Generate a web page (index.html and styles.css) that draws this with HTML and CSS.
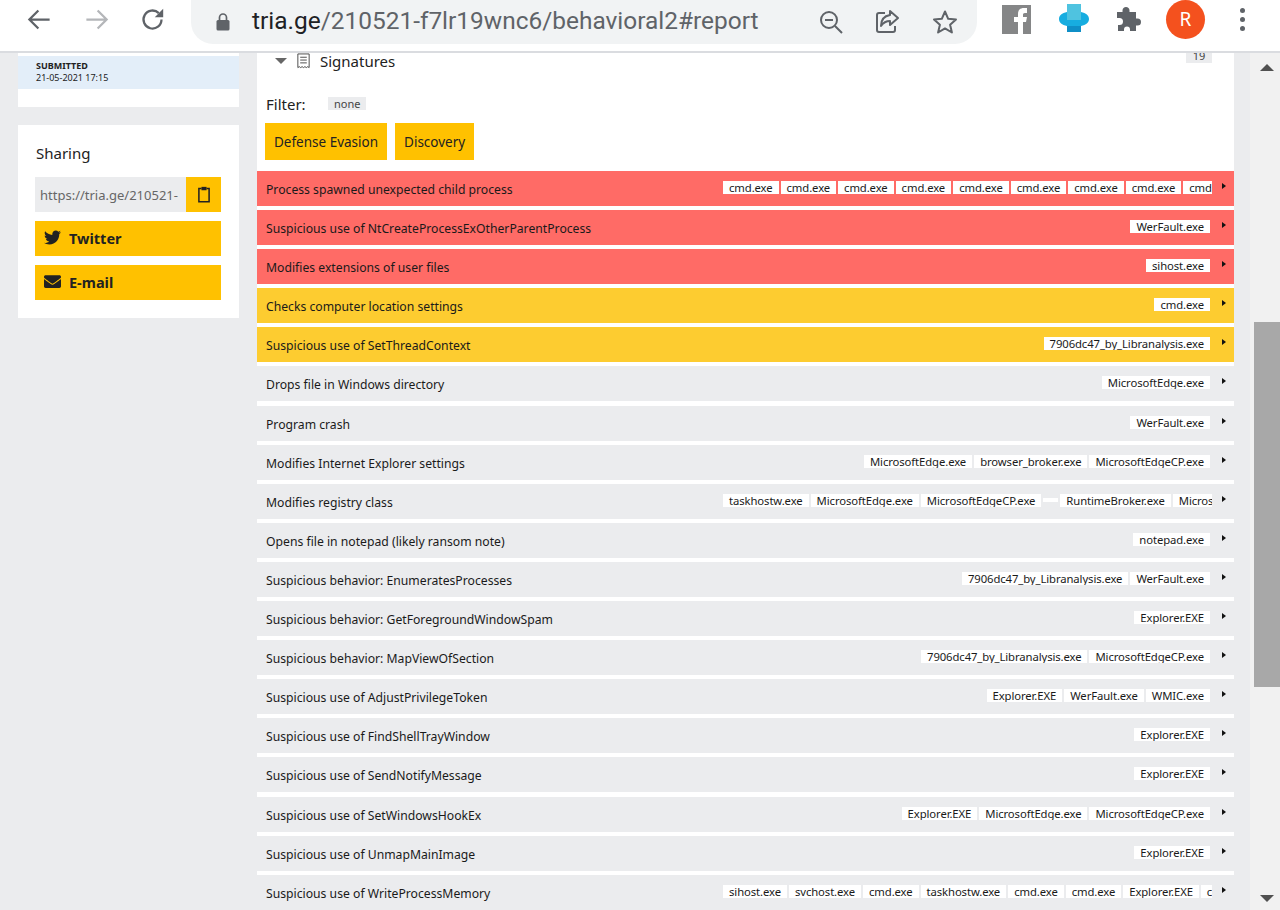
FILE: index.html
```html
<!DOCTYPE html>
<html lang="en">

<head>
    <meta charset="UTF-8">
    <title>tria.ge - behavioral2 report</title>
    <link rel="stylesheet" href="styles.css">
</head>

<body>
    <header class="toolbar">
        <div class="nav-icons">
            <svg class="nav-icon" viewBox="0 0 24 24"><path d="M21 12H4M11 4l-8 8 8 8" fill="none" stroke="#5f6368" stroke-width="2"/></svg>
            <svg class="nav-icon" viewBox="0 0 24 24"><path d="M3 12h17M13 4l8 8-8 8" fill="none" stroke="#b4b6b9" stroke-width="2"/></svg>
            <svg class="nav-icon nav-reload" viewBox="0 0 24 24"><path d="M20 12a8 8 0 1 1-2.4-5.7" fill="none" stroke="#5f6368" stroke-width="2"/><path d="M21.5 2.5v7.5H14z" fill="#5f6368"/></svg>
        </div>
        <div class="omnibox">
            <svg class="lock" viewBox="0 0 16 20"><path d="M4.500 8V5.500a3.500 3.500 0 0 1 7 0V8" fill="none" stroke="#5f6368" stroke-width="1.700"/><rect x="1.500" y="8" width="13" height="10.500" rx="1.500" fill="#5f6368"/></svg>
            <div class="url"><span class="url-host">tria.ge</span>/210521-f7lr19wnc6/behavioral2#report</div>
            <svg class="omni-icon" viewBox="0 0 26 26"><circle cx="11" cy="11" r="8" fill="none" stroke="#5f6368" stroke-width="2"/><path d="M7 11h8M17 17l7 7" fill="none" stroke="#5f6368" stroke-width="2"/></svg>
            <svg class="omni-icon" viewBox="0 0 26 26"><path d="M11 4H5a2 2 0 0 0-2 2v15a2 2 0 0 0 2 2h14a2 2 0 0 0 2-2v-4" fill="none" stroke="#5f6368" stroke-width="2"/><path d="M16 2l8 7-8 7v-4c-5 0-7 2-9 5 0-6 3-10 9-11z" fill="none" stroke="#5f6368" stroke-width="2" stroke-linejoin="round"/></svg>
            <svg class="omni-icon omni-star" viewBox="0 0 26 26"><path d="M13 2.500l3.200 7.300 7.800.7-5.900 5.200 1.800 7.800-6.900-4.100-6.900 4.100 1.800-7.800-5.900-5.200 7.800-.7z" fill="none" stroke="#5f6368" stroke-width="2" stroke-linejoin="round"/></svg>
        </div>
        <div class="extensions">
            <svg class="ext-fb" viewBox="0 0 29 29"><rect width="29" height="29" fill="#858687"/><path d="M16 29V17h-4v-5h4V9c0-4 2-6 6-6h3v5h-2c-2 0-2 1-2 2v2h4l-1 5h-3v12z" fill="#fff"/></svg>
            <svg class="ext-print" viewBox="0 0 30 30"><path d="M8 8C3 9 0 11.500 0 15s3 6 8 7h14c5-1 8-3.500 8-7s-3-6-8-7v5c0 2-1.500 3-3.500 3h-7C9.500 16 8 15 8 13z" fill="#17ade0"/><rect x="8" y="0" width="14" height="16" fill="#4fc3e0"/><rect x="8" y="22" width="14" height="6" fill="#0f8fc7"/></svg>
            <svg class="ext-puzzle" viewBox="0 0 26 26"><path d="M10 1c2 0 3.500 1.500 3.500 3.500V6H20v6.500h1.500a3.500 3.500 0 0 1 0 7H20V25h-6v-1.500a3 3 0 0 0-6 0V25H2v-6h1.500a3.500 3.500 0 0 0 0-7H1V6h5.500V4.500C6.500 2.500 8 1 10 1z" fill="#5f6368"/></svg>
            <div class="avatar">R</div>
            <div class="kebab"><i></i><i></i><i></i></div>
        </div>
    </header>

    <div class="viewport">
        <aside class="sidebar">
            <div class="card card-meta">
                <div class="submitted">
                    <strong>SUBMITTED</strong>
                    <span>21-05-2021 17:15</span>
                </div>
            </div>
            <div class="card card-share">
                <h3>Sharing</h3>
                <div class="share-link">
                    <div class="share-url">https://tria.ge/210521-</div>
                    <div class="copy-btn">
                        <svg viewBox="0 0 16 20"><path d="M5 3H2v15.500h12V3h-3" fill="none" stroke="#222" stroke-width="1.800"/><rect x="5" y="1" width="6" height="4" fill="#222"/></svg>
                    </div>
                </div>
                <div class="share-btn">
                    <svg viewBox="0 0 512 512"><path d="M459 152c.3 4.500.3 9.100.3 13.600 0 138.700-105.600 298.600-298.600 298.600-59.500 0-114.700-17.200-161.100-47.100 8.400 1 16.600 1.300 25.300 1.300 49.100 0 94.200-16.600 130.300-44.800-46.100-1-84.800-31.200-98.100-72.800 6.500 1 13 1.600 19.800 1.600 9.400 0 18.800-1.300 27.600-3.600-48.100-9.700-84.100-52-84.100-103v-1.300c14 7.800 30.200 12.700 47.400 13.300-28.300-18.800-46.800-51-46.800-87.400 0-19.500 5.200-37.400 14.300-53 51.700 63.700 129.300 105.300 216.400 109.800-1.600-7.800-2.600-15.900-2.600-24 0-57.800 46.800-104.900 104.900-104.900 30.200 0 57.500 12.700 76.700 33.100 23.700-4.500 46.500-13.300 66.600-25.300-7.800 24-24.400 44.200-46.100 57.200 21.100-2.300 41.600-8.100 60.400-16.200-14.300 20.800-32.200 39.300-52.600 54.300z" fill="#222"/></svg>
                    <span>Twitter</span>
                </div>
                <div class="share-btn">
                    <svg viewBox="0 0 512 512"><path d="M502 190c4-3 10 0 10 5v205c0 27-22 48-48 48H48c-27 0-48-21-48-48V195c0-5 6-8 10-5 22 17 52 39 154 114 21 15 57 48 92 48 36 0 72-33 92-48 102-75 132-97 154-114zM256 320c23 0 57-29 74-41 133-97 143-105 174-129 6-5 8-12 8-19v-19c0-27-22-48-48-48H48C21 64 0 85 0 112v19c0 7 3 14 8 19 31 24 41 32 174 129 17 12 51 41 74 41z" fill="#222"/></svg>
                    <span>E-mail</span>
                </div>
            </div>
        </aside>

        <main class="panel">
            <div class="panel-head">
                <span class="caret-down"></span>
                <svg class="sig-icon" viewBox="0 0 15 17"><path d="M1.500 1h12v14.500l-1.500-1-1.500 1-1.500-1-1.500 1-1.500-1-1.500 1-1.500-1-1.500 1z" fill="none" stroke="#444" stroke-width="1"/><path d="M4 4.500h7M4 7.500h7M4 10.500h7" stroke="#444" stroke-width="1"/></svg>
                <span class="panel-title">Signatures</span>
                <span class="count">19</span>
            </div>
            <div class="filter-row">
                <span class="filter-label">Filter:</span>
                <span class="filter-value">none</span>
            </div>
            <div class="filter-btns">
                <div class="filter-btn">Defense Evasion</div>
                <div class="filter-btn">Discovery</div>
            </div>

            <div class="sig-list">
                <div class="sig sig-red">
                    <span class="sig-name">Process spawned unexpected child process</span>
                    <div class="tags"><span class="tag">cmd.exe</span><span class="tag">cmd.exe</span><span class="tag">cmd.exe</span><span class="tag">cmd.exe</span><span class="tag">cmd.exe</span><span class="tag">cmd.exe</span><span class="tag">cmd.exe</span><span class="tag">cmd.exe</span><span class="tag">cmd.exe</span></div>
                    <span class="caret"></span>
                </div>
                <div class="sig sig-red">
                    <span class="sig-name">Suspicious use of NtCreateProcessExOtherParentProcess</span>
                    <div class="tags"><span class="tag">WerFault.exe</span></div>
                    <span class="caret"></span>
                </div>
                <div class="sig sig-red">
                    <span class="sig-name">Modifies extensions of user files</span>
                    <div class="tags"><span class="tag">sihost.exe</span></div>
                    <span class="caret"></span>
                </div>
                <div class="sig sig-yellow">
                    <span class="sig-name">Checks computer location settings</span>
                    <div class="tags"><span class="tag">cmd.exe</span></div>
                    <span class="caret"></span>
                </div>
                <div class="sig sig-yellow">
                    <span class="sig-name">Suspicious use of SetThreadContext</span>
                    <div class="tags"><span class="tag">7906dc47_by_Libranalysis.exe</span></div>
                    <span class="caret"></span>
                </div>
                <div class="sig">
                    <span class="sig-name">Drops file in Windows directory</span>
                    <div class="tags"><span class="tag">MicrosoftEdge.exe</span></div>
                    <span class="caret"></span>
                </div>
                <div class="sig">
                    <span class="sig-name">Program crash</span>
                    <div class="tags"><span class="tag">WerFault.exe</span></div>
                    <span class="caret"></span>
                </div>
                <div class="sig">
                    <span class="sig-name">Modifies Internet Explorer settings</span>
                    <div class="tags"><span class="tag">MicrosoftEdge.exe</span><span class="tag">browser_broker.exe</span><span class="tag">MicrosoftEdgeCP.exe</span></div>
                    <span class="caret"></span>
                </div>
                <div class="sig">
                    <span class="sig-name">Modifies registry class</span>
                    <div class="tags"><span class="tag">taskhostw.exe</span><span class="tag">MicrosoftEdge.exe</span><span class="tag">MicrosoftEdgeCP.exe</span><span class="tag tag-empty"></span><span class="tag">RuntimeBroker.exe</span><span class="tag">MicrosoftEdge.exe</span></div>
                    <span class="caret"></span>
                </div>
                <div class="sig">
                    <span class="sig-name">Opens file in notepad (likely ransom note)</span>
                    <div class="tags"><span class="tag">notepad.exe</span></div>
                    <span class="caret"></span>
                </div>
                <div class="sig">
                    <span class="sig-name">Suspicious behavior: EnumeratesProcesses</span>
                    <div class="tags"><span class="tag">7906dc47_by_Libranalysis.exe</span><span class="tag">WerFault.exe</span></div>
                    <span class="caret"></span>
                </div>
                <div class="sig">
                    <span class="sig-name">Suspicious behavior: GetForegroundWindowSpam</span>
                    <div class="tags"><span class="tag">Explorer.EXE</span></div>
                    <span class="caret"></span>
                </div>
                <div class="sig">
                    <span class="sig-name">Suspicious behavior: MapViewOfSection</span>
                    <div class="tags"><span class="tag">7906dc47_by_Libranalysis.exe</span><span class="tag">MicrosoftEdgeCP.exe</span></div>
                    <span class="caret"></span>
                </div>
                <div class="sig">
                    <span class="sig-name">Suspicious use of AdjustPrivilegeToken</span>
                    <div class="tags"><span class="tag">Explorer.EXE</span><span class="tag">WerFault.exe</span><span class="tag">WMIC.exe</span></div>
                    <span class="caret"></span>
                </div>
                <div class="sig">
                    <span class="sig-name">Suspicious use of FindShellTrayWindow</span>
                    <div class="tags"><span class="tag">Explorer.EXE</span></div>
                    <span class="caret"></span>
                </div>
                <div class="sig">
                    <span class="sig-name">Suspicious use of SendNotifyMessage</span>
                    <div class="tags"><span class="tag">Explorer.EXE</span></div>
                    <span class="caret"></span>
                </div>
                <div class="sig">
                    <span class="sig-name">Suspicious use of SetWindowsHookEx</span>
                    <div class="tags"><span class="tag">Explorer.EXE</span><span class="tag">MicrosoftEdge.exe</span><span class="tag">MicrosoftEdgeCP.exe</span></div>
                    <span class="caret"></span>
                </div>
                <div class="sig">
                    <span class="sig-name">Suspicious use of UnmapMainImage</span>
                    <div class="tags"><span class="tag">Explorer.EXE</span></div>
                    <span class="caret"></span>
                </div>
                <div class="sig">
                    <span class="sig-name">Suspicious use of WriteProcessMemory</span>
                    <div class="tags"><span class="tag">sihost.exe</span><span class="tag">svchost.exe</span><span class="tag">cmd.exe</span><span class="tag">taskhostw.exe</span><span class="tag">cmd.exe</span><span class="tag">cmd.exe</span><span class="tag">Explorer.EXE</span><span class="tag">cmd.exe</span></div>
                    <span class="caret"></span>
                </div>
            </div>
        </main>

        <div class="scrollbar">
            <span class="scroll-up"></span>
            <div class="scroll-track"><div class="scroll-thumb"></div></div>
            <span class="scroll-down"></span>
        </div>
    </div>
</body>

</html>
```
FILE: styles.css
```css
* {
    box-sizing: border-box;
}

html,
body {
    margin: 0;
    height: 910px;
    overflow: hidden;
}

body {
    font-family: "Noto Sans", "Open Sans", sans-serif;
    background-color: #ebecee;
    color: #222;
    display: flex;
    flex-direction: column;
}

/* browser bar */
.toolbar {
    height: 53px;
    flex-shrink: 0;
    display: flex;
    align-items: flex-start;
    background-color: white;
    border-bottom: 2px solid #dadce0;
}

.nav-icons {
    display: flex;
    gap: 30px;
    padding: 6px 0 0 26px;
    width: 191px;
}

.nav-icon {
    width: 27px;
    height: 27px;
}

.nav-reload {
    margin-left: -1px;
}

.omnibox {
    width: 786px;
    height: 44px;
    display: flex;
    align-items: center;
    background-color: #f1f3f4;
    border-radius: 0 0 22px 22px;
    padding: 0 19px 0 24px;
}

.lock {
    width: 16px;
    height: 20px;
    margin-right: 21px;
}

.url {
    flex: 1;
    font-family: "Roboto", sans-serif;
    font-size: 24.450px;
    color: #5f6368;
    padding-bottom: 3px;
    white-space: nowrap;
}

.url-host {
    color: #202124;
}

.omni-icon {
    width: 26px;
    height: 26px;
    margin-left: 30px;
}

.omni-star {
    margin-left: 32px;
}

.extensions {
    display: flex;
    align-items: center;
    height: 38px;
    padding-left: 25px;
}

.ext-fb {
    width: 29px;
    height: 29px;
}

.ext-print {
    width: 30px;
    height: 30px;
    margin-left: 28px;
}

.ext-puzzle {
    width: 26px;
    height: 26px;
    margin-left: 27px;
}

.avatar {
    width: 39px;
    height: 39px;
    margin-left: 24px;
    border-radius: 50%;
    background-color: #f4511e;
    color: white;
    font-size: 19px;
    display: flex;
    align-items: center;
    justify-content: center;
}

.kebab {
    display: flex;
    flex-direction: column;
    gap: 4px;
    margin-left: 35px;
}

.kebab i {
    width: 5px;
    height: 5px;
    border-radius: 50%;
    background-color: #5f6368;
}

/* page */
.viewport {
    flex: 1;
    display: flex;
    min-height: 0;
}

.sidebar {
    width: 221px;
    margin: 0 18px;
    flex-shrink: 0;
}

.card {
    background-color: white;
}

.card-meta {
    height: 54px;
    padding-top: 3px;
    margin-bottom: 18px;
}

.submitted {
    height: 33px;
    background-color: #e3eef9;
    padding: 4px 18px 0;
    font-size: 9px;
    line-height: 12px;
    color: #222;
}

.submitted strong,
.submitted span {
    display: block;
}

.card-share {
    height: 193px;
    padding: 18px 18px 0 17px;
}

.card-share h3 {
    margin: 0 0 13px 1px;
    font-size: 15px;
    line-height: 21px;
    font-weight: 400;
}

.share-link {
    display: flex;
    height: 35px;
    margin-bottom: 9px;
}

.share-url {
    flex: 1;
    background-color: #ebecee;
    color: #666;
    font-size: 13px;
    line-height: 36px;
    padding-left: 5px;
    white-space: nowrap;
    overflow: hidden;
}

.copy-btn {
    width: 35px;
    background-color: #ffc100;
    display: flex;
    align-items: center;
    justify-content: center;
}

.copy-btn svg {
    width: 14px;
    height: 17px;
}

.share-btn {
    height: 35px;
    margin-bottom: 9px;
    background-color: #ffc100;
    display: flex;
    align-items: center;
    gap: 8px;
    padding: 0 0 2px 9px;
    font-size: 14.500px;
    font-weight: 700;
}

.share-btn svg {
    width: 17px;
    height: 17px;
}

/* signatures panel */
.panel {
    width: 977px;
    background-color: white;
    overflow: hidden;
}

.panel-head {
    height: 16px;
    display: flex;
    align-items: center;
    padding: 0 22px 0 18px;
}

.caret-down {
    width: 0;
    height: 0;
    border-left: 6px solid transparent;
    border-right: 6px solid transparent;
    border-top: 6px solid #666;
    margin-right: 9px;
}

.sig-icon {
    width: 15px;
    height: 16px;
    flex-shrink: 0;
    margin-right: 9px;
}

.panel-title {
    flex: 1;
    font-size: 15px;
    line-height: 16px;
}

.count {
    align-self: flex-start;
    width: 26px;
    height: 10px;
    background-color: #ebecee;
    font-size: 11px;
    line-height: 6px;
    text-align: center;
    color: #444;
    overflow: hidden;
}

.filter-row {
    display: flex;
    align-items: center;
    height: 19px;
    margin-top: 25px;
    padding-left: 9px;
}

.filter-label {
    width: 62px;
    font-size: 15px;
}

.filter-value {
    background-color: #ebecee;
    font-size: 11px;
    line-height: 13px;
    padding: 0 6px;
    color: #444;
}

.filter-btns {
    display: flex;
    gap: 8px;
    margin: 10px 0 11px;
    padding-left: 8px;
}

.filter-btn {
    height: 37px;
    line-height: 38px;
    padding: 0 9px;
    background-color: #ffc100;
    font-size: 13.500px;
}

.sig-list {
    display: flex;
    flex-direction: column;
    gap: 4.100px;
}

.sig {
    height: 35px;
    flex-shrink: 0;
    display: flex;
    align-items: center;
    padding: 0 8px 0 9px;
    background-color: #ebecee;
    color: #1a1a1a;
}

.sig-red {
    background-color: #ff6b66;
}

.sig-yellow {
    background-color: #fdcc30;
}

.sig-name {
    flex: 1;
    font-size: 12.200px;
    padding-top: 2px;
    white-space: nowrap;
}

.tags {
    display: flex;
    max-width: 489px;
    overflow: hidden;
    margin-top: -2px;
}

.tag {
    flex-shrink: 0;
    background-color: white;
    font-size: 11.300px;
    line-height: 13px;
    padding: 0 6px;
    margin-right: 2px;
    letter-spacing: -0.1px;
}

.tag-empty {
    width: 15px;
    height: 4px;
    align-self: center;
    padding: 0;
}

.caret {
    width: 0;
    height: 0;
    margin: -5px 0 0 10px;
    border-top: 3.500px solid transparent;
    border-bottom: 3.500px solid transparent;
    border-left: 4px solid #111;
}

/* scrollbar */
.scrollbar {
    width: 30px;
    margin-left: 16px;
    background-color: #f1f1f1;
    display: flex;
    flex-direction: column;
    align-items: center;
    padding: 11px 0 8px;
}

.scroll-up,
.scroll-down {
    width: 0;
    height: 0;
    border-left: 7px solid transparent;
    border-right: 7px solid transparent;
    margin-left: 4px;
}

.scroll-up {
    border-bottom: 7px solid #505050;
}

.scroll-down {
    border-top: 7px solid #505050;
}

.scroll-track {
    flex: 1;
    width: 100%;
    padding: 251px 0 0 4px;
}

.scroll-thumb {
    height: 365px;
    background-color: #a8a8a8;
}
```
